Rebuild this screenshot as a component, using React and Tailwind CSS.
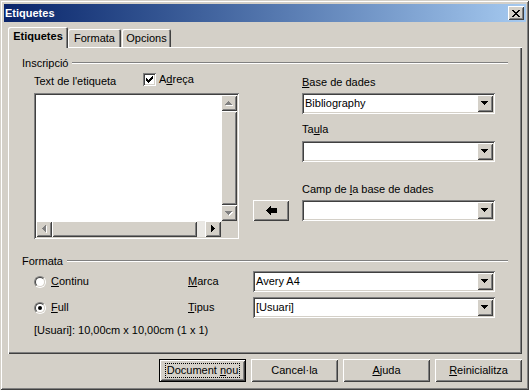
import React from 'react';

// vores clàssiques de Windows
const raised = "shadow-[inset_1px_1px_0_#fff,inset_-1px_-1px_0_#404040,inset_2px_2px_0_#d4d0c8,inset_-2px_-2px_0_#808080]";
const sunken = "shadow-[inset_1px_1px_0_#808080,inset_-1px_-1px_0_#fff,inset_2px_2px_0_#404040,inset_-2px_-2px_0_#d4d0c8]";

const triPaths = {
    down: "M0 0h7v1H0zM1 1h5v1H1zM2 2h3v1H2zM3 3h1v1H3z",
    up: "M3 0h1v1H3zM2 1h3v1H2zM1 2h5v1H1zM0 3h7v1H0z",
    left: "M3 0h1v7H3zM2 1h1v5H2zM1 2h1v3H1zM0 3h1v1H0z",
    right: "M0 0h1v7H0zM1 1h1v5H1zM2 2h1v3H2zM3 3h1v1H3z",
};

function Tri({ dir, disabled }) {
    const horiz = dir === 'left' || dir === 'right';
    const w = horiz ? 4 : 7;
    const h = horiz ? 7 : 4;
    return (
        <svg width={w + 1} height={h + 1} viewBox={`0 0 ${w + 1} ${h + 1}`} shapeRendering="crispEdges">
            {disabled && <path d={triPaths[dir]} fill="#fff" transform="translate(1 1)" />}
            <path d={triPaths[dir]} fill={disabled ? '#808080' : '#000'} />
        </svg>
    );
}

function ScrollBtn({ children }) {
    return (
        <div className={`w-[16px] h-[16px] shrink-0 bg-[#d4d0c8] flex items-center justify-center ${raised}`}>
            {children}
        </div>
    );
}

function Combo({ value, className = "" }) {
    return (
        <div className={`h-[21px] bg-white p-[2px] flex ${sunken} ${className}`}>
            <div className="flex-1 flex items-center pl-[1px] overflow-hidden whitespace-nowrap">{value}</div>
            <div className={`w-[16px] bg-[#d4d0c8] flex items-center justify-center ${raised}`}>
                <Tri dir="down" />
            </div>
        </div>
    );
}

function GroupHeader({ label }) {
    return (
        <div className="flex items-center h-[14px] gap-[4px]">
            <span>{label}</span>
            <div className="flex-1 h-[2px] border-t border-t-[#808080] border-b border-b-white" />
        </div>
    );
}

function Radio({ checked }) {
    return (
        <div className="w-[12px] h-[12px] shrink-0 rounded-full border border-t-[#808080] border-l-[#808080] border-r-white border-b-white">
            <div className="w-full h-full rounded-full border border-t-[#404040] border-l-[#404040] border-r-[#d4d0c8] border-b-[#d4d0c8] bg-white flex items-center justify-center">
                {checked && <div className="w-[4px] h-[4px] rounded-full bg-black" />}
            </div>
        </div>
    );
}

function Button({ children, isDefault }) {
    if (isDefault) {
        return (
            <div className={`w-[87px] h-[23px] border border-black bg-[#d4d0c8] flex ${raised}`}>
                <div className="flex-1 m-[3px_5px] border border-dotted border-black flex items-center justify-center">
                    <span className="whitespace-nowrap">{children}</span>
                </div>
            </div>
        );
    }
    return (
        <div className={`w-[87px] h-[23px] bg-[#d4d0c8] flex items-center justify-center ${raised}`}>
            <span className="whitespace-nowrap">{children}</span>
        </div>
    );
}

export default function App() {
    return (
        <div className="w-[529px] h-[390px] overflow-hidden bg-[#d4d0c8] font-['Liberation_Sans',Arial,sans-serif] text-[11px] leading-[13px] text-black pt-[4px] pl-[4px] pr-[3px] shadow-[inset_1px_1px_0_#d4d0c8,inset_-1px_-1px_0_#404040,inset_2px_2px_0_#fff,inset_-2px_-2px_0_#808080]">
            {/* barra de títol */}
            <div className="h-[18px] flex items-center bg-linear-to-r from-[#0a246a] to-[#a6caf0] pl-[1px] pr-[2px]">
                <span className="flex-1 text-white font-bold">Etiquetes</span>
                <div className={`w-[16px] h-[14px] bg-[#d4d0c8] flex items-center justify-center ${raised}`}>
                    <svg width="8" height="7" viewBox="0 0 8 7" shapeRendering="crispEdges">
                        <path d="M0 0h2v1H0zM6 0h2v1H6zM1 1h2v1H1zM5 1h2v1H5zM2 2h4v1H2zM3 3h2v1H3zM2 4h4v1H2zM1 5h2v1H1zM5 5h2v1H5zM0 6h2v1H0zM6 6h2v1H6z" fill="#000" />
                    </svg>
                </div>
            </div>

            <div className="px-[4px] mt-[5px]">
                {/* pestanyes */}
                <div className="flex items-end h-[20px]">
                    <div className="relative z-10 -mb-px h-[21px] w-[60px] bg-[#d4d0c8] rounded-t-[2px] font-bold flex items-center justify-center pb-[2px] shadow-[inset_1px_1px_0_#fff,inset_-1px_0_0_#404040,inset_-2px_0_0_#808080]">
                        Etiquetes
                    </div>
                    <div className="h-[18px] w-[53px] rounded-t-[2px] flex items-center justify-center shadow-[inset_1px_1px_0_#fff,inset_-1px_0_0_#404040,inset_-2px_0_0_#808080]">
                        Formata
                    </div>
                    <div className="h-[18px] w-[49px] ml-px rounded-t-[2px] flex items-center justify-center shadow-[inset_1px_1px_0_#fff,inset_-1px_0_0_#404040,inset_-2px_0_0_#808080]">
                        Opcions
                    </div>
                </div>

                {/* panell */}
                <div className="h-[307px] px-[14px] pt-[9px] shadow-[inset_1px_1px_0_#fff,inset_-1px_-1px_0_#404040,inset_-2px_-2px_0_#808080]">
                    <GroupHeader label="Inscripció" />
                    <div className="flex pl-[12px]">
                        <div className="w-[205px]">
                            <div className="flex items-start h-[13px] mt-[3px]">
                                <span className="w-[109px] mt-[2px]">Text de l'etiqueta</span>
                                <div className={`w-[13px] h-[13px] bg-white flex items-center justify-center ${sunken}`}>
                                    <svg width="7" height="7" viewBox="0 0 7 7" shapeRendering="crispEdges">
                                        <path d="M0 2h1v3H0zM1 3h1v3H1zM2 4h1v3H2zM3 3h1v3H3zM4 2h1v3H4zM5 1h1v3H5zM6 0h1v3H6z" fill="#000" />
                                    </svg>
                                </div>
                                <span className="ml-[3px]">A<span className="underline">d</span>reça</span>
                            </div>
                            <div className={`mt-[7px] w-[205px] h-[146px] p-[2px] bg-white flex flex-col ${sunken}`}>
                                <div className="flex flex-1 min-h-0">
                                    <div className="flex-1 bg-white" />
                                    <div className="w-[16px] flex flex-col">
                                        <ScrollBtn><Tri dir="up" disabled /></ScrollBtn>
                                        <div className={`flex-1 bg-[#d4d0c8] ${raised}`} />
                                        <ScrollBtn><Tri dir="down" disabled /></ScrollBtn>
                                    </div>
                                </div>
                                <div className="h-[16px] flex">
                                    <ScrollBtn><Tri dir="left" disabled /></ScrollBtn>
                                    <div className={`w-[145px] bg-[#d4d0c8] ${raised}`} />
                                    <div className="flex-1 bg-[#eae8e4]" />
                                    <ScrollBtn><Tri dir="right" /></ScrollBtn>
                                    <div className="w-[16px] bg-[#d4d0c8]" />
                                </div>
                            </div>
                        </div>

                        <div className="ml-[14px] w-[36px]">
                            <div className={`mt-[130px] h-[21px] bg-[#d4d0c8] flex items-center justify-center ${raised}`}>
                                <svg width="11" height="9" viewBox="0 0 11 9" shapeRendering="crispEdges">
                                    <path d="M4 0h1v9H4zM3 1h1v7H3zM2 2h1v5H2zM1 3h1v3H1zM0 4h1v1H0zM5 2h6v5H5z" fill="#000" />
                                </svg>
                            </div>
                        </div>

                        <div className="ml-[13px] w-[193px]">
                            <div className="mt-[6px] h-[13px]"><span className="underline">B</span>ase de dades</div>
                            <Combo value="Bibliography" className="mt-[4px]" />
                            <div className="mt-[9px] h-[13px]">Ta<span className="underline">u</span>la</div>
                            <Combo value="" className="mt-[5px]" />
                            <div className="mt-[21px] h-[13px]">Camp de <span className="underline">l</span>a base de dades</div>
                            <Combo value="" className="mt-[4px]" />
                        </div>
                    </div>

                    <div className="mt-[15px]">
                        <GroupHeader label="Formata" />
                    </div>
                    <div className="pl-[12px]">
                        <div className="mt-[3px] h-[21px] flex items-center">
                            <div className="w-[154px] flex items-center gap-[5px]">
                                <Radio />
                                <span><span className="underline">C</span>ontinu</span>
                            </div>
                            <span className="w-[65px]"><span className="underline">M</span>arca</span>
                            <Combo value="Avery A4" className="w-[242px]" />
                        </div>
                        <div className="mt-[5px] h-[21px] flex items-center">
                            <div className="w-[154px] flex items-center gap-[5px]">
                                <Radio checked />
                                <span><span className="underline">F</span>ull</span>
                            </div>
                            <span className="w-[65px]"><span className="underline">T</span>ipus</span>
                            <Combo value="[Usuari]" className="w-[242px]" />
                        </div>
                        <div className="mt-[6px] h-[13px]">[Usuari]: 10,00cm x 10,00cm (1 x 1)</div>
                    </div>
                </div>

                {/* botons */}
                <div className="mt-[5px] flex justify-end gap-[5px]">
                    <Button isDefault>Document <span className="underline">n</span>ou</Button>
                    <Button>Cancel·la</Button>
                    <Button><span className="underline">A</span>juda</Button>
                    <Button><span className="underline">R</span>einicialitza</Button>
                </div>
            </div>
        </div>
    );
}
